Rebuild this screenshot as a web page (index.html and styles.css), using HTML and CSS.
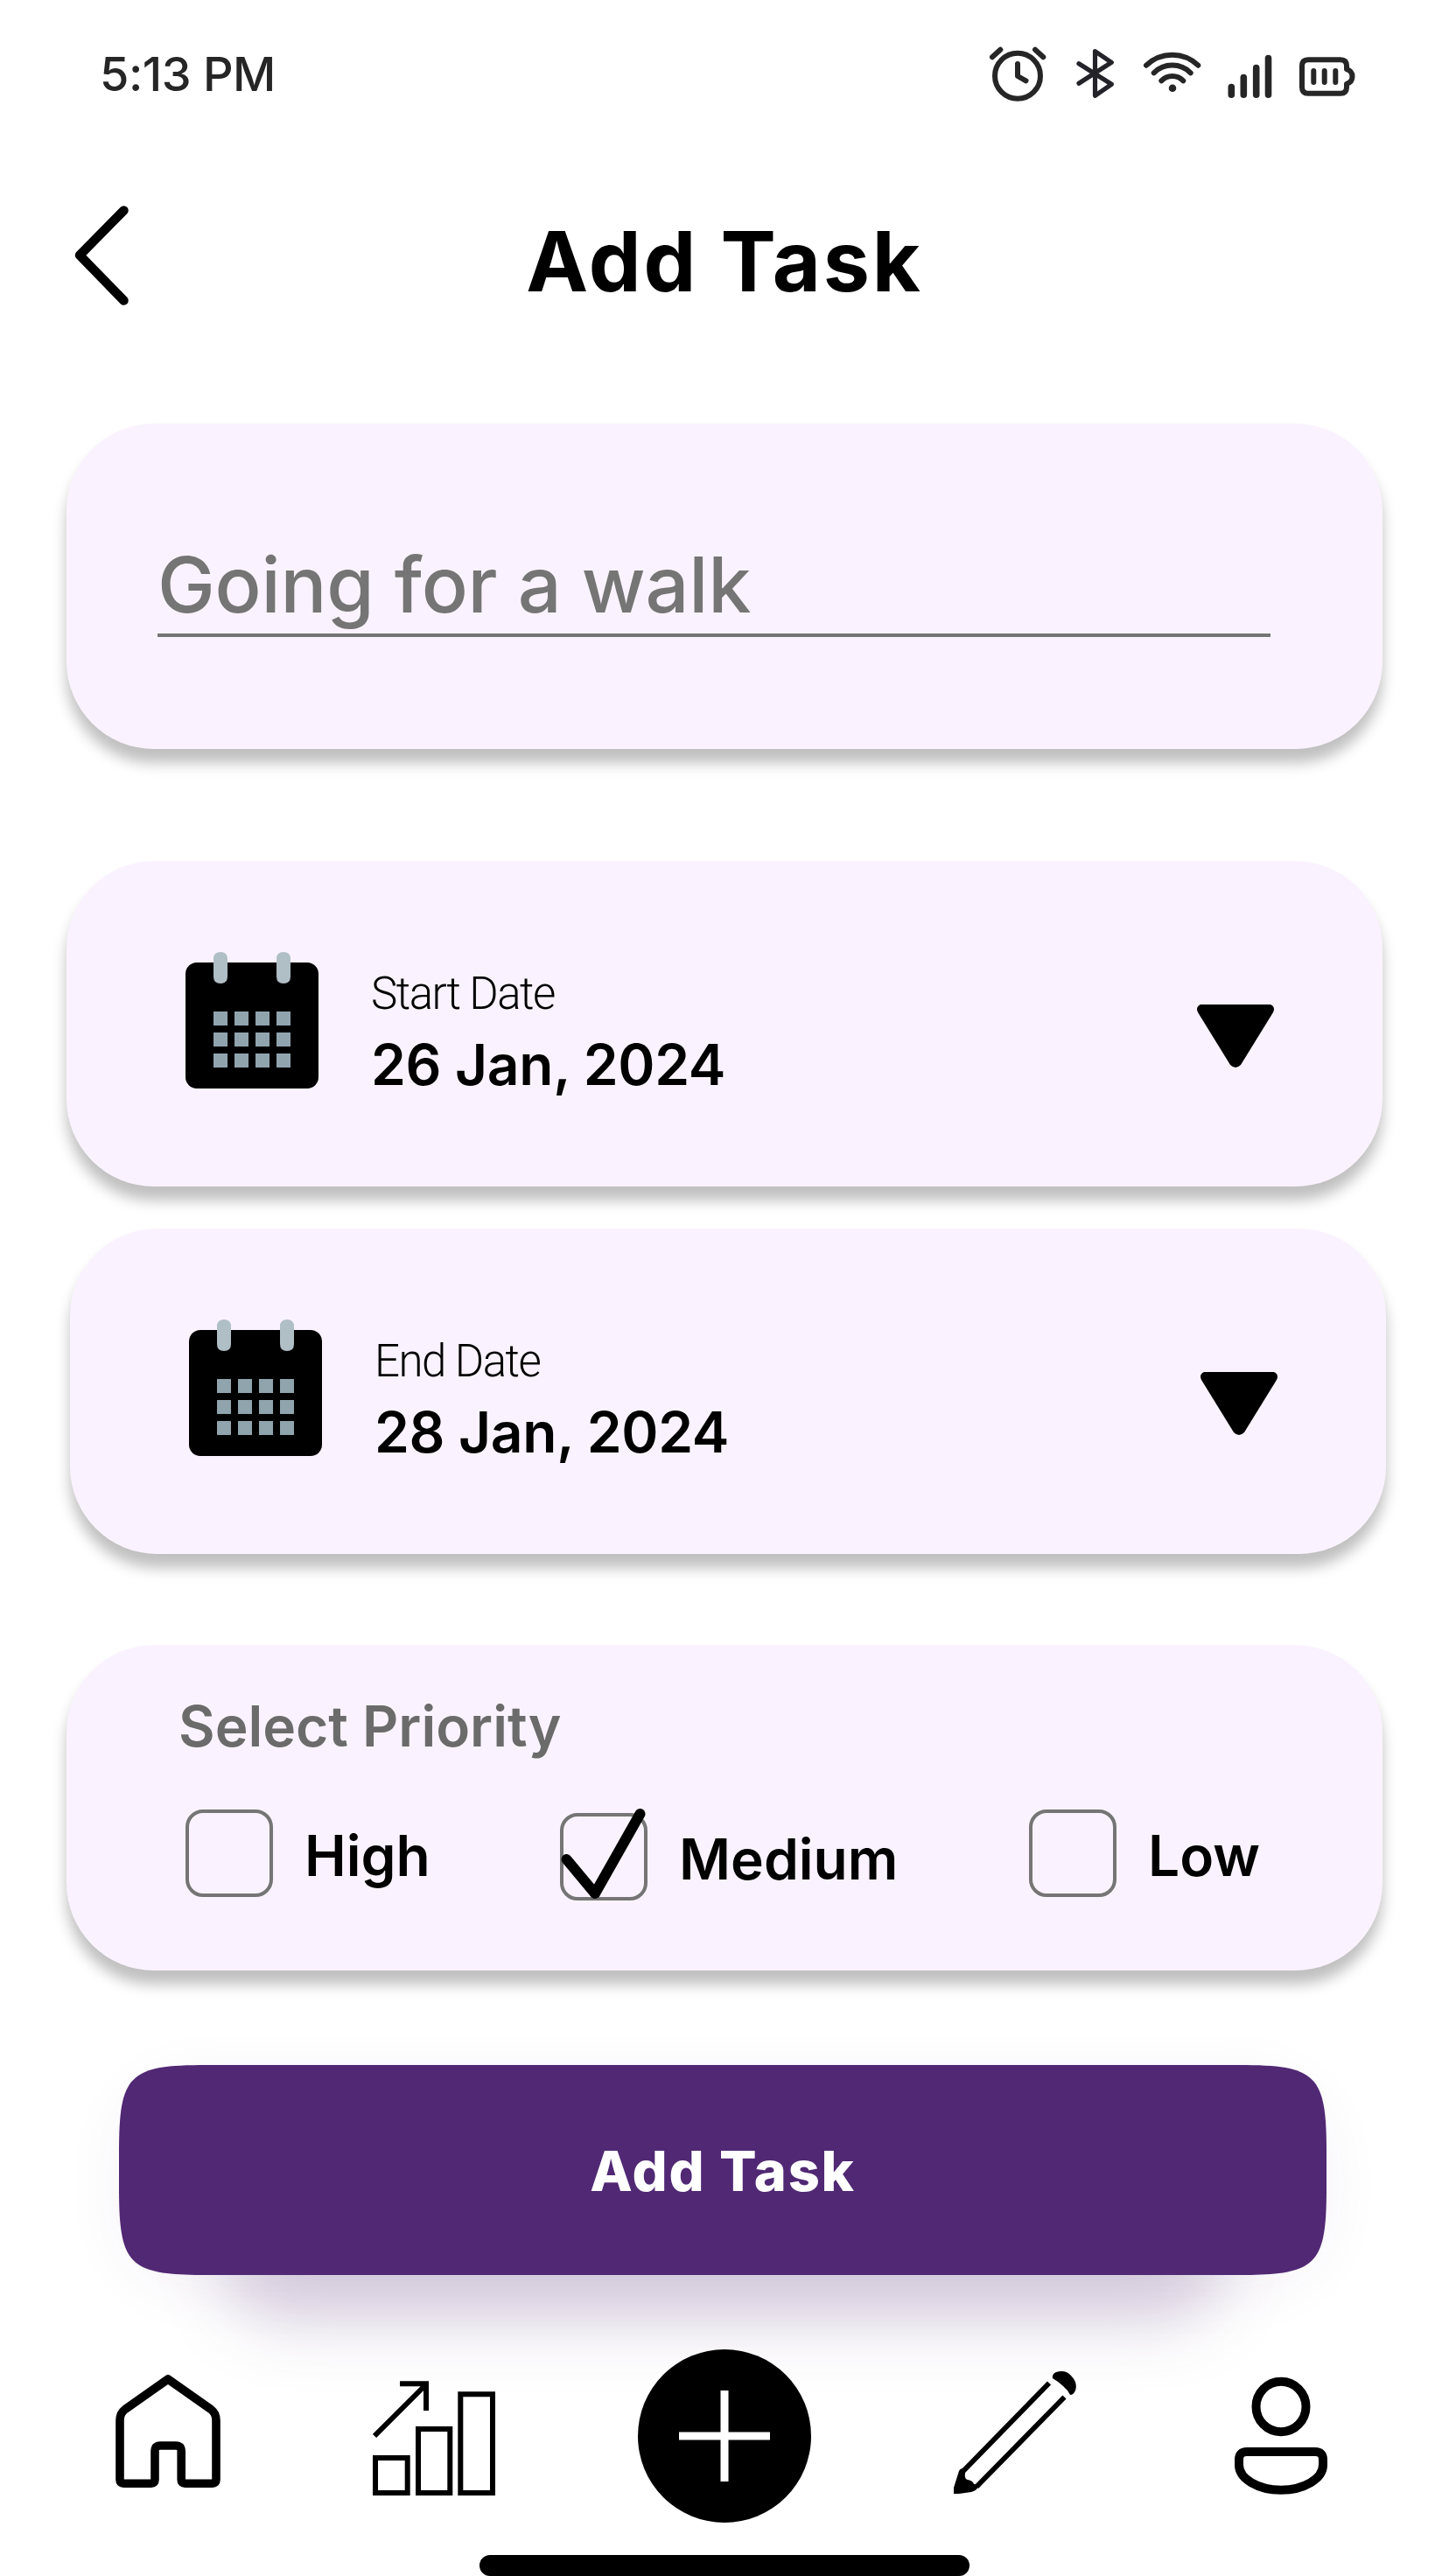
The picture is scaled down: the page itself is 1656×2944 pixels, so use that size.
FILE: index.html
```html
<!DOCTYPE html>
<html lang="en">
<head>
<meta charset="utf-8">
<title>Add Task</title>
<link rel="stylesheet" href="styles.css">
</head>
<body>
<div class="screen">
  <div class="status-bar">
    <span class="clock">5:13 PM</span>
    <div class="status-icons">
      <svg width="68" height="84" viewBox="1130 42 68 84"><g class="line"><circle cx="1163" cy="86.7" r="26"/><path d="M1163 73v14l9.5 5.3M1134 65.3l9.3-8.6M1183 56.7l9.3 8.6"/></g></svg>
      <svg width="52" height="84" viewBox="1226 42 52 84"><path class="line thin" d="M1233 72.7l37.3 23.6-18.8 13V58.7l18.8 12.6-37.3 24"/></svg>
      <svg width="67" height="84" viewBox="1306 42 67 84"><path class="line" d="M1310 74.7a42.7 42.7 0 0 1 59.3 0M1318.7 83.3a29.7 29.7 0 0 1 42 0M1327.3 92.3a17.4 17.4 0 0 1 25 0"/><circle cx="1340" cy="100.7" r="4.3" fill="#262626"/></svg>
      <svg width="54" height="84" viewBox="1401 42 54 84"><path class="line bold" d="M1407.3 99.5v8.7M1421.3 88.5v19.7M1435.7 77.5v30.7M1449.5 66.5v41.7"/></svg>
      <svg width="68" height="84" viewBox="1483 42 68 84"><path class="line" d="M1495 68.2h37q7 0 7 7v4q6.5 2 6.5 8.3t-6.5 8.3v4q0 7-7 7h-37q-7 0-7-7v-24.6q0-7 7-7zM1501.3 81v13M1513.7 81v13M1526.3 81v13"/></svg>
    </div>
  </div>

  <header class="header">
    <svg width="72" height="140" viewBox="80 228 72 140"><path d="M141.500 240.5L91 291.7l50.500 51.8" fill="none" stroke="#000" stroke-width="10.5" stroke-linecap="round" stroke-linejoin="round"/></svg>
    <h1 class="title">Add Task</h1>
  </header>

  <main>
    <section class="card name-card">
      <p class="field">Going for a walk</p>
    </section>

    <section class="card date-card">
      <svg class="calendar" width="152" height="156" viewBox="0 0 152 156"><rect y="12" width="152" height="144" rx="13"/><path fill="#b0bec5" d="M32 8q0-8 8-8t8 8v20q0 8-8 8t-8-8zM104 8q0-8 8-8t8 8v20q0 8-8 8t-8-8z"/><path fill="#90a4ae" d="M32 68h16v16H32zM56 68h16v16H56zM80 68h16v16H80zM104 68h16v16h-16zM32 92h16v16H32zM56 92h16v16H56zM80 92h16v16H80zM104 92h16v16h-16zM32 116h16v16H32zM56 116h16v16H56zM80 116h16v16H80zM104 116h16v16h-16z"/></svg>
      <div class="date-text">
        <div class="date-label">Start Date</div>
        <div class="date-value">26 Jan, 2024</div>
      </div>
      <svg class="caret" width="88" height="72" viewBox="0 0 88 72"><path d="M4 0h80q6 3 3 9L50 69q-6 6-12 0L1 9Q-2 3 4 0z"/></svg>
    </section>

    <section class="card date-card end-card">
      <svg class="calendar" width="152" height="156" viewBox="0 0 152 156"><rect y="12" width="152" height="144" rx="13"/><path fill="#b0bec5" d="M32 8q0-8 8-8t8 8v20q0 8-8 8t-8-8zM104 8q0-8 8-8t8 8v20q0 8-8 8t-8-8z"/><path fill="#90a4ae" d="M32 68h16v16H32zM56 68h16v16H56zM80 68h16v16H80zM104 68h16v16h-16zM32 92h16v16H32zM56 92h16v16H56zM80 92h16v16H80zM104 92h16v16h-16zM32 116h16v16H32zM56 116h16v16H56zM80 116h16v16H80zM104 116h16v16h-16z"/></svg>
      <div class="date-text">
        <div class="date-label">End Date</div>
        <div class="date-value">28 Jan, 2024</div>
      </div>
      <svg class="caret" width="88" height="72" viewBox="0 0 88 72"><path d="M4 0h80q6 3 3 9L50 69q-6 6-12 0L1 9Q-2 3 4 0z"/></svg>
    </section>

    <section class="card priority-card">
      <h2 class="priority-title">Select Priority</h2>
      <div class="options">
        <div class="option"><span class="box"></span><span class="option-text">High</span></div>
        <div class="option selected"><span class="box"><svg class="check" width="100" height="100" viewBox="0 0 100 100"><path d="M7.5 53L40 92 91.5 1" fill="none" stroke="#000" stroke-width="12" stroke-linecap="round" stroke-linejoin="round"/></svg></span><span class="option-text">Medium</span></div>
        <div class="option"><span class="box"></span><span class="option-text">Low</span></div>
      </div>
    </section>

    <div class="submit">
      <svg class="submit-shape" width="1380" height="240" viewBox="0 0 1380 240"><path fill="#502873" d="M0 100C0 11 11 0 100 0H1280C1369 0 1380 11 1380 100V140C1380 229 1369 240 1280 240H100C11 240 0 229 0 140z"/></svg>
      <span class="submit-text">Add Task</span>
    </div>
  </main>

  <nav class="nav">
    <svg width="131" height="200" viewBox="132 2684 131 200"><path d="M137 2766q0-8 6-12.500L192 2719l49 34.500q6 4.500 6 12.500V2834q0 4.300-4.300 4.300H211.500q-4.300 0-4.300-4.300V2801q0-6-6-6H183q-6 0-6 6V2834q0 4.300-4.300 4.300H141.300q-4.300 0-4.300-4.300z" fill="none" stroke="#000" stroke-width="9.600" stroke-linejoin="round"/></svg>
    <svg width="140" height="200" viewBox="426 2684 140 200"><path d="M429 2809h36.700v40H429zM478 2776h36.300v73H478zM526.300 2736.300h36.700V2849h-36.700zM457 2724.300h30V2755M428 2784l58-58" fill="none" stroke="#000" stroke-width="6"/></svg>
    <svg width="198" height="200" viewBox="729 2684 198 200"><circle cx="828" cy="2784" r="99"/><path d="M776 2784h104M828 2732v104" stroke="#fff" stroke-width="9"/></svg>
    <svg width="140" height="200" viewBox="1090 2684 140 200"><path d="M1100 2825l99-101.500M1116 2842l100.500-102.500" fill="none" stroke="#000" stroke-width="5.800"/><path d="M1090 2850v-7l6-19q2-4 5-2l2 5q-1 6 3 7 6 1 7 5 3 0 6 2l-3 4q-2 2-6 3l-14 2zM1203 2718q-1-5 4-7 11-3 17 4 8 8 5 17-2 5-6 5-3-6-8-10-5-5-12-9z"/></svg>
    <svg width="125" height="200" viewBox="1393 2684 125 200"><g fill="none" stroke="#000" stroke-width="10"><ellipse cx="1464" cy="2750.500" rx="28.500" ry="28.700"/><path d="M1425 2802h78q9 0 9 9v6c0 16-22 28.700-48 28.700s-48-12.700-48-28.700v-6q0-9 9-9z"/></g></svg>
  </nav>
  <div class="home-indicator"></div>
</div>
</body>
</html>
```

FILE: styles.css
```css
* { box-sizing: border-box; margin: 0; padding: 0; }

body {
  background: #fff;
  color: #000;
  font-family: Inter, "Liberation Sans", sans-serif;
}

svg { display: block; flex: none; }

.screen {
  width: 1656px;
  height: 2944px;
  overflow: hidden;
  display: flex;
  flex-direction: column;
}

.status-bar {
  height: 168px;
  padding: 0 105px 0 114px;
  display: flex;
  align-items: center;
  justify-content: space-between;
}

.clock {
  font-size: 54px;
  font-weight: 550;
  letter-spacing: -.5px;
  color: #262626;
}

.status-icons { display: flex; gap: 28px; }

.line {
  fill: none;
  stroke: #262626;
  stroke-width: 6;
  stroke-linecap: round;
  stroke-linejoin: round;
}
.line.thin { stroke: #24232a; stroke-width: 5.2; }
.line.bold { stroke-width: 7.6; }

.header {
  height: 260px;
  margin-bottom: 56px;
  padding: 0 80px;
  display: grid;
  grid-template-columns: 1fr auto 1fr;
  align-items: center;
}

.title {
  font-size: 95px;
  font-weight: 750;
  letter-spacing: 2.8px;
}

.card {
  width: 1504px;
  height: 372px;
  margin-left: 76px;
  border-radius: 100px;
  background: #faf3ff;
  box-shadow: 0 16px 16px rgba(0, 0, 0, .25);
}

.name-card { margin-bottom: 128px; padding: 128px 128px 0 104px; }

.field {
  border-bottom: 4px solid #757575;
  color: #757575;
  font-size: 88px;
  font-weight: 500;
  line-height: 112px;
  letter-spacing: -.2px;
}

.date-card {
  margin-bottom: 48px;
  padding: 0 124px 0 136px;
  display: flex;
  align-items: flex-start;
}
.end-card { margin-left: 80px; margin-bottom: 104px; }

.calendar { margin-top: 104px; }
.date-text { margin: 120px 0 0 60px; white-space: nowrap; }

.date-label {
  font-family: Roboto, "Liberation Sans", sans-serif;
  font-size: 51px;
  font-weight: 300;
  line-height: 64px;
  letter-spacing: -1.5px;
}

.date-value {
  font-size: 64px;
  font-weight: 600;
  line-height: 98px;
  letter-spacing: -.3px;
}

.caret { margin: 164px 0 0 auto; }

.priority-card { margin-bottom: 108px; padding: 53px 0 0 128px; }

.priority-title {
  color: #6b6b6b;
  font-size: 64px;
  font-weight: 600;
  line-height: 80px;
}

.options {
  margin: 55px 0 0 8px;
  display: grid;
  grid-template-columns: 428px 536px auto;
}

.option {
  height: 100px;
  display: flex;
  align-items: center;
  gap: 36px;
}
.selected { margin-top: 4px; }

.box {
  width: 100px;
  height: 100px;
  border: 4px solid #757575;
  border-radius: 20px;
}

.check { margin: -4px; overflow: visible; }

.option-text {
  padding-top: 5px;
  font-size: 64px;
  font-weight: 600;
}

.submit {
  position: relative;
  width: 1380px;
  height: 240px;
  margin-left: 136px;
  display: grid;
  place-items: center;
  border-radius: 90px;
  box-shadow: 0 16px 70px rgba(80, 40, 115, .06);
}

/* soft glow below the button */
.submit::before {
  content: "";
  position: absolute;
  inset: 80px 120px -54px;
  border-radius: 70px;
  background: rgba(80, 40, 115, .22);
  filter: blur(38px);
}

.submit-shape { position: absolute; inset: 0; }

.submit-text {
  position: relative;
  padding-top: 1px;
  color: #fff;
  font-size: 63px;
  font-weight: 850;
  letter-spacing: 1.8px;
}

.nav {
  position: relative;
  margin-top: 84px;
  padding-left: 132px;
  display: flex;
  gap: 163px;
}

.home-indicator {
  width: 560px;
  height: 24px;
  margin: 36px 0 0 548px;
  border-radius: 12px;
  background: #000;
}
```
